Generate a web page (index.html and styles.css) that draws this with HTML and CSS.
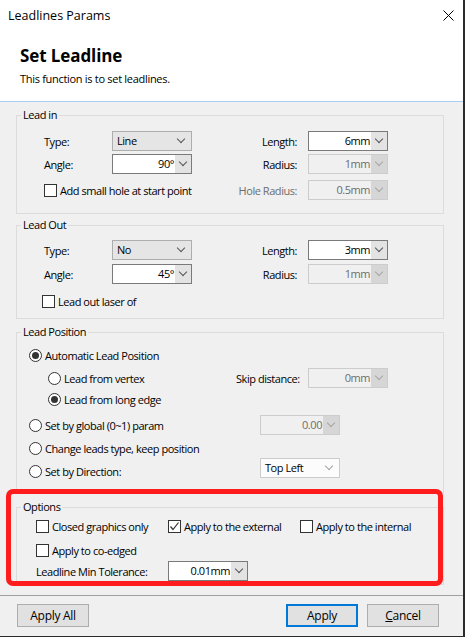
FILE: index.html
```html
<!DOCTYPE html>
<html lang="en">
<head>
    <meta charset="UTF-8">
    <title>Leadlines Params</title>
    <link rel="stylesheet" href="styles.css">
</head>
<body>
    <div class="dialog">
        <div class="titlebar">
            <span class="title">Leadlines Params</span>
            <svg class="close" width="11" height="11" viewBox="0 0 11 11">
                <path d="M0.5 0.5 L10.5 10.5 M10.5 0.5 L0.5 10.5" stroke="#000" stroke-width="1" fill="none"/>
            </svg>
        </div>

        <div class="header">
            <h1>Set Leadline</h1>
            <p>This function is to set leadlines.</p>
        </div>

        <div class="content">
            <div class="group g-in">
                <span class="group-title">Lead in</span>
                <div class="row">
                    <span class="lbl">Type:</span>
                    <div class="combo list"><span class="val">Line</span><span class="arrow"></span></div>
                    <span class="lbl right">Length:</span>
                    <div class="combo edit"><span class="val">6mm</span><span class="arrow"></span></div>
                </div>
                <div class="row">
                    <span class="lbl">Angle:</span>
                    <div class="combo edit"><span class="val">90°</span><span class="arrow"></span></div>
                    <span class="lbl right">Radius:</span>
                    <div class="combo off"><span class="val">1mm</span><span class="arrow"></span></div>
                </div>
                <div class="row gap6">
                    <label class="check span2"><span class="box"></span>Add small hole at start point</label>
                    <span class="lbl right muted">Hole Radius:</span>
                    <div class="combo off"><span class="val">0.5mm</span><span class="arrow"></span></div>
                </div>
            </div>

            <div class="group g-out">
                <span class="group-title">Lead Out</span>
                <div class="row">
                    <span class="lbl">Type:</span>
                    <div class="combo list"><span class="val">No</span><span class="arrow"></span></div>
                    <span class="lbl right">Length:</span>
                    <div class="combo edit"><span class="val">3mm</span><span class="arrow"></span></div>
                </div>
                <div class="row gap4">
                    <span class="lbl">Angle:</span>
                    <div class="combo edit"><span class="val">45°</span><span class="arrow"></span></div>
                    <span class="lbl right">Radius:</span>
                    <div class="combo off"><span class="val">1mm</span><span class="arrow"></span></div>
                </div>
                <div class="row gap7">
                    <label class="check span2 shift"><span class="box"></span>Lead out laser of</label>
                </div>
            </div>

            <div class="group g-pos">
                <span class="group-title">Lead Position</span>
                <div class="pos-row">
                    <label class="radio-opt"><span class="radio on"></span>Automatic Lead Position</label>
                </div>
                <div class="pos-row sub gap3">
                    <label class="radio-opt vertex"><span class="radio"></span>Lead from vertex</label>
                    <span class="skip-lbl">Skip distance:</span>
                    <div class="combo off"><span class="val">0mm</span><span class="arrow"></span></div>
                </div>
                <div class="pos-row sub gap1">
                    <label class="radio-opt"><span class="radio on"></span>Lead from long edge</label>
                </div>
                <div class="pos-row gap6">
                    <label class="radio-opt wide"><span class="radio"></span>Set by global (0~1) param</label>
                    <div class="combo off"><span class="val">0.00</span><span class="arrow"></span></div>
                </div>
                <div class="pos-row gap3">
                    <label class="radio-opt"><span class="radio"></span>Change leads type, keep position</label>
                </div>
                <div class="pos-row gap3">
                    <label class="radio-opt wide"><span class="radio"></span>Set by Direction:</label>
                    <div class="combo plain raised"><span class="val">Top Left</span><span class="arrow"></span></div>
                </div>
            </div>

            <div class="group g-opt">
                <span class="group-title">Options</span>
                <div class="opt-row">
                    <label class="check"><span class="box"></span>Closed graphics only</label>
                    <label class="check"><span class="box checked">
                        <svg width="11" height="11" viewBox="0 0 11 11"><path d="M1.5 5.5 L4 8.5 L9.5 1.5" stroke="#333" stroke-width="1.2" fill="none"/></svg>
                    </span>Apply to the external</label>
                    <label class="check"><span class="box"></span>Apply to the internal</label>
                </div>
                <div class="opt-row gap4">
                    <label class="check"><span class="box"></span>Apply to co-edged</label>
                </div>
                <div class="opt-row gap1">
                    <span class="lbl">Leadline Min Tolerance:</span>
                    <div class="combo edit"><span class="val">0.01mm</span><span class="arrow"></span></div>
                </div>
            </div>
        </div>

        <div class="footer">
            <button class="btn">Apply All</button>
            <button class="btn primary">Apply</button>
            <button class="btn"><u>C</u>ancel</button>
        </div>

        <div class="highlight"></div>
    </div>
</body>
</html>
```

FILE: styles.css
```css
* {
    box-sizing: border-box;
    margin: 0;
    padding: 0;
}

body {
    width: 465px;
    height: 637px;
    overflow: hidden;
    background: #fff;
    font-family: 'Open Sans', 'Noto Sans', sans-serif;
    font-size: 11px;
    letter-spacing: -0.45px;
    color: #000;
}

.dialog {
    position: relative;
    width: 465px;
    height: 637px;
    background: #f0f0f0;
    border-right: 2px solid #2b2b2b;
    border-bottom: 1px solid #2b2b2b;
}

.titlebar {
    height: 30px;
    background: #fff;
    display: flex;
    align-items: center;
    justify-content: space-between;
    padding: 0 9px 0 8px;
    font-size: 12.5px;
    letter-spacing: 0;
}

.header {
    height: 72px;
    background: #fff;
    border-bottom: 1px solid #a9cdee;
    padding: 15px 0 0 20px;
}

.header h1 {
    font-size: 17px;
    line-height: 22px;
    font-weight: 700;
    letter-spacing: -0.1px;
}

.header p {
    margin-top: 4px;
    line-height: 16px;
    letter-spacing: -0.3px;
}

.content {
    height: 493px;
    padding: 13px 0 0 16px;
}

/* group boxes */
.group {
    position: relative;
    width: 428px;
    border: 1px solid #dcdcdc;
}

.group-title {
    position: absolute;
    top: -9px;
    left: 4px;
    padding: 0 2px;
    line-height: 16px;
    background: #f0f0f0;
}

.g-in {
    height: 99px;
    padding: 15px 0 0 27px;
}

.g-out {
    margin-top: 11px;
    height: 94px;
    padding: 14px 0 0 27px;
}

.g-pos {
    margin-top: 13px;
    height: 162px;
    padding: 12px 0 0 12px;
}

.g-opt {
    margin-top: 13px;
    height: 78px;
    padding: 8px 0 0 19px;
}

.row {
    display: grid;
    grid-template-columns: 68px 80px 116px 80px;
    align-items: center;
    height: 20px;
}

.row + .row { margin-top: 3px; }
.row.gap4 { margin-top: 4px; }
.row.gap6 { margin-top: 6px; }
.row.gap7 { margin-top: 7px; }

.lbl.right {
    text-align: right;
    padding-right: 11px;
}

.muted {
    color: #6d6d6d;
}

.span2 {
    grid-column: span 2;
}

/* combo boxes */
.combo {
    display: flex;
    width: 80px;
    height: 20px;
    border: 1px solid #7a7a7a;
    background: #fff;
}

.combo .val {
    flex: 1;
    line-height: 18px;
    text-align: right;
    padding-right: 1px;
    white-space: nowrap;
}

.combo .arrow {
    width: 16px;
    display: flex;
    align-items: center;
    justify-content: center;
    background: #e3e3e3;
}

.combo .arrow::after {
    content: '';
    width: 5px;
    height: 5px;
    border-right: 1px solid #555;
    border-bottom: 1px solid #555;
    transform: rotate(45deg);
    margin-top: -4px;
}

.combo.list {
    border-color: #adadad;
    background: #e5e5e5;
}

.combo.list .val,
.combo.plain .val {
    text-align: left;
    padding-left: 4px;
}

.combo.list .arrow {
    width: 20px;
    background: none;
}

.combo.off {
    border-color: #cccccc;
    background: #f0f0f0;
    color: #6d6d6d;
}

.combo.off .arrow {
    background: #d6d6d6;
}

.combo.off .arrow::after,
.combo.plain .arrow::after {
    border-color: #a5a5a5;
}

.combo.plain {
    border-color: #cccccc;
    background: #fcfcfc;
}

.combo.plain .arrow {
    width: 20px;
    background: none;
}

.raised {
    align-self: flex-start;
    margin-top: -3px;
}

/* check boxes and radios */
.check,
.radio-opt {
    display: flex;
    align-items: center;
    white-space: nowrap;
}

.box {
    flex-shrink: 0;
    width: 13px;
    height: 13px;
    border: 1px solid #333;
    background: #fff;
    margin-right: 3px;
    display: flex;
    align-items: center;
    justify-content: center;
}

.check.shift {
    margin-left: -2px;
}

.radio {
    flex-shrink: 0;
    width: 13px;
    height: 13px;
    border: 1px solid #333;
    border-radius: 50%;
    background: #fff;
    margin-right: 3px;
    display: flex;
    align-items: center;
    justify-content: center;
}

.radio.on::after {
    content: '';
    width: 7px;
    height: 7px;
    border-radius: 50%;
    background: #333;
}

.pos-row {
    display: flex;
    align-items: center;
    height: 20px;
}

.pos-row.gap1 { margin-top: 1px; }
.pos-row.gap3 { margin-top: 3px; }
.pos-row.gap6 { margin-top: 6px; }

.pos-row.sub {
    padding-left: 19px;
}

.radio-opt.vertex {
    width: 188px;
}

.radio-opt.wide {
    width: 231px;
}

.skip-lbl {
    width: 72px;
}

.opt-row {
    display: grid;
    grid-template-columns: 132px 132px auto;
    align-items: center;
    height: 20px;
}

.opt-row.gap1 { margin-top: 1px; }
.opt-row.gap4 { margin-top: 4px; }

/* footer */
.footer {
    height: 41px;
    border-top: 1px solid #a0a0a0;
    display: flex;
    gap: 9px;
    padding: 8px 24px 0 17px;
}

.btn {
    width: 72px;
    height: 23px;
    border: 1px solid #adadad;
    background: #e1e1e1;
    font-family: inherit;
    font-size: 12px;
    letter-spacing: -0.3px;
    color: #000;
}

.btn.primary {
    margin-left: auto;
    border: 2px solid #0078d7;
}

.btn u {
    text-decoration: underline;
}

.highlight {
    position: absolute;
    left: 6px;
    top: 489px;
    width: 437px;
    height: 97px;
    border: 5px solid #ff1c1c;
    border-radius: 7px;
}
```
